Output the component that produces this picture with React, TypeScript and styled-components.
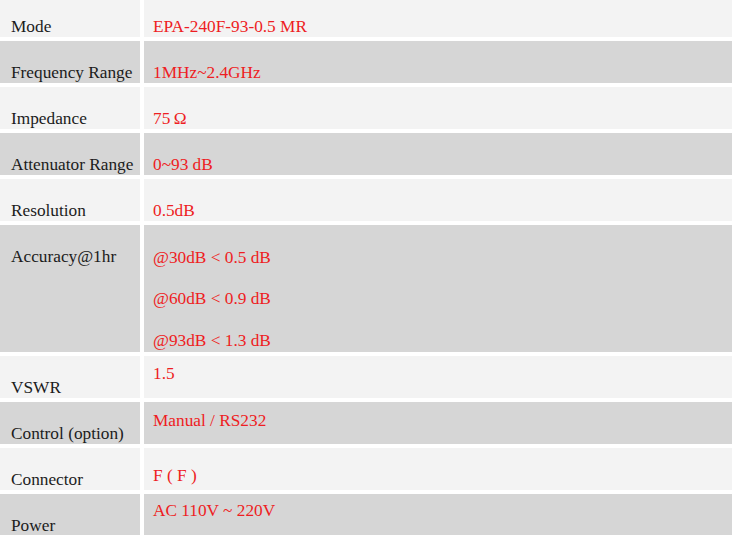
import React from "react";
import styled, { createGlobalStyle } from "styled-components";

const Global = createGlobalStyle`
  html, body {
    margin: 0;
    padding: 0;
    background: #ffffff;
    overflow: hidden;
  }
  body {
    font-family: "Liberation Serif", "Times New Roman", serif;
  }
`;

const SpecTable = styled.div`
  display: grid;
  grid-template-columns: 140px 1fr;
  column-gap: 4px;
  row-gap: 4px;
  width: 732px;
  margin-top: -5px;
`;

const Cell = styled.div<{ $shade: "light" | "dark"; $tall?: boolean }>`
  background: ${(p) => (p.$shade === "light" ? "#f3f3f3" : "#d6d6d6")};
  height: ${(p) => (p.$tall ? "127px" : "42px")};
  box-sizing: border-box;
  font-size: 17.3px;
  line-height: 20px;
  white-space: nowrap;
`;

const Label = styled(Cell)`
  color: #1c1c1c;
  padding: 21.5px 0 0 11px;
`;

const Value = styled(Cell)<{ $top: number }>`
  color: #ee1d23;
  padding: ${(p) => p.$top}px 0 0 9px;
  display: flex;
  flex-direction: column;
  gap: 21.5px;
`;

const Line = styled.span`
  display: block;
`;

type Spec = {
  label: string;
  values: string[];
  top?: number;
  tall?: boolean;
};

const specs: Spec[] = [
  { label: "Mode", values: ["EPA-240F-93-0.5 MR"] },
  { label: "Frequency Range", values: ["1MHz~2.4GHz"] },
  { label: "Impedance", values: ["75\u2009Ω"] },
  { label: "Attenuator Range", values: ["0~93 dB"] },
  { label: "Resolution", values: ["0.5dB"] },
  {
    label: "Accuracy@1hr",
    values: ["@30dB < 0.5 dB", "@60dB < 0.9 dB", "@93dB < 1.3 dB"],
    top: 22.5,
    tall: true,
  },
  { label: "VSWR", values: ["1.5"], top: 7.5 },
  { label: "Control (option)", values: ["Manual / RS232"], top: 8.5 },
  { label: "Connector", values: ["F ( F )"], top: 17.5 },
  { label: "Power", values: ["AC 110V ~ 220V"], top: 6.5 },
];

export default function App() {
  return (
    <>
      <Global />
      <SpecTable>
        {specs.map((s, i) => {
          const shade = i % 2 === 0 ? "light" : "dark";
          return (
            <React.Fragment key={s.label}>
              <Label $shade={shade} $tall={s.tall}>
                {s.label}
              </Label>
              <Value $shade={shade} $tall={s.tall} $top={s.top ?? 21.5}>
                {s.values.map((v) => (
                  <Line key={v}>{v}</Line>
                ))}
              </Value>
            </React.Fragment>
          );
        })}
      </SpecTable>
    </>
  );
}
